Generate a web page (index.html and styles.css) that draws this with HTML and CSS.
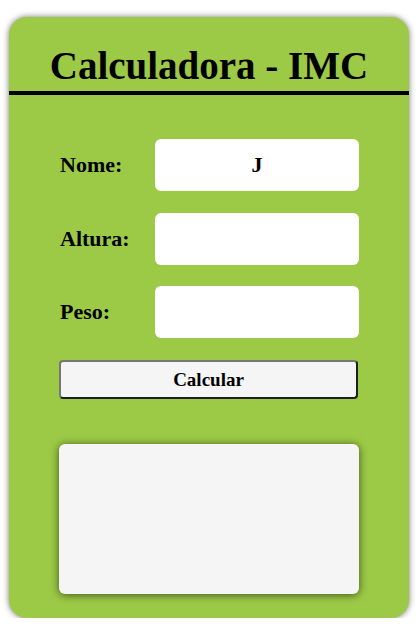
FILE: index.html
```html
<!DOCTYPE html>
<html lang="pt">
<head>
<meta charset="utf-8">
<title>Calculadora - IMC</title>
<link rel="stylesheet" href="styles.css">
</head>
<body>
  <main class="card">
    <header class="card-header">
      <h1 class="title">Calculadora - IMC</h1>
    </header>
    <form class="form">
      <div class="fields">
        <label class="label" for="nome">Nome:</label>
        <input class="input" id="nome" type="text" value="J">
        <label class="label" for="altura">Altura:</label>
        <input class="input" id="altura" type="text">
        <label class="label" for="peso">Peso:</label>
        <input class="input" id="peso" type="text">
      </div>
      <button class="button" type="button">Calcular</button>
      <div class="result"></div>
    </form>
  </main>
</body>
</html>
```

FILE: styles.css
```css
* { box-sizing: border-box; }

html, body {
  margin: 0;
  padding: 0;
  background: #ffffff;
}

body {
  padding: 17px 11px 0 9px;
  font-family: "Liberation Serif", "Times New Roman", serif;
  color: #000;
}

.card {
  width: 400px;
  height: 601px;
  background: #9cca46;
  border-radius: 18px;
  box-shadow: 0 0 6px rgba(0, 0, 0, 0.55);
  overflow: hidden;
}

.card-header {
  padding-top: 26px;
  padding-bottom: 2px;
  border-bottom: 4px solid #000;
}

.title {
  margin: 0;
  font-size: 39px;
  line-height: 46px;
  font-weight: bold;
  text-align: center;
}

.form {
  display: flex;
  flex-direction: column;
  padding: 44px 50px 0 50px;
}

.fields {
  display: grid;
  grid-template-columns: 96px 1fr;
  row-gap: 21.5px;
  align-items: center;
}

.label {
  font-size: 22px;
  font-weight: bold;
  padding-left: 1px;
}

.input {
  height: 52px;
  width: 204px;
  border: none;
  border-radius: 6px;
  background: #ffffff;
  font-family: "Liberation Serif", "Times New Roman", serif;
  font-size: 22px;
  font-weight: bold;
  text-align: center;
  color: #000;
  outline: none;
}

.button {
  margin-top: 22px;
  width: 299px;
  height: 39px;
  border: 2px solid;
  border-color: #777777 #1e1e1e #1e1e1e #777777;
  border-radius: 4px;
  background: #f5f5f5;
  font-family: "Liberation Serif", "Times New Roman", serif;
  font-size: 19px;
  font-weight: bold;
  color: #000;
  padding: 0;
}

.result {
  margin-top: 45px;
  width: 300px;
  height: 150px;
  background: #f5f5f5;
  border-radius: 6px;
  box-shadow: 0 1px 9px rgba(0, 0, 0, 0.6);
}
```
